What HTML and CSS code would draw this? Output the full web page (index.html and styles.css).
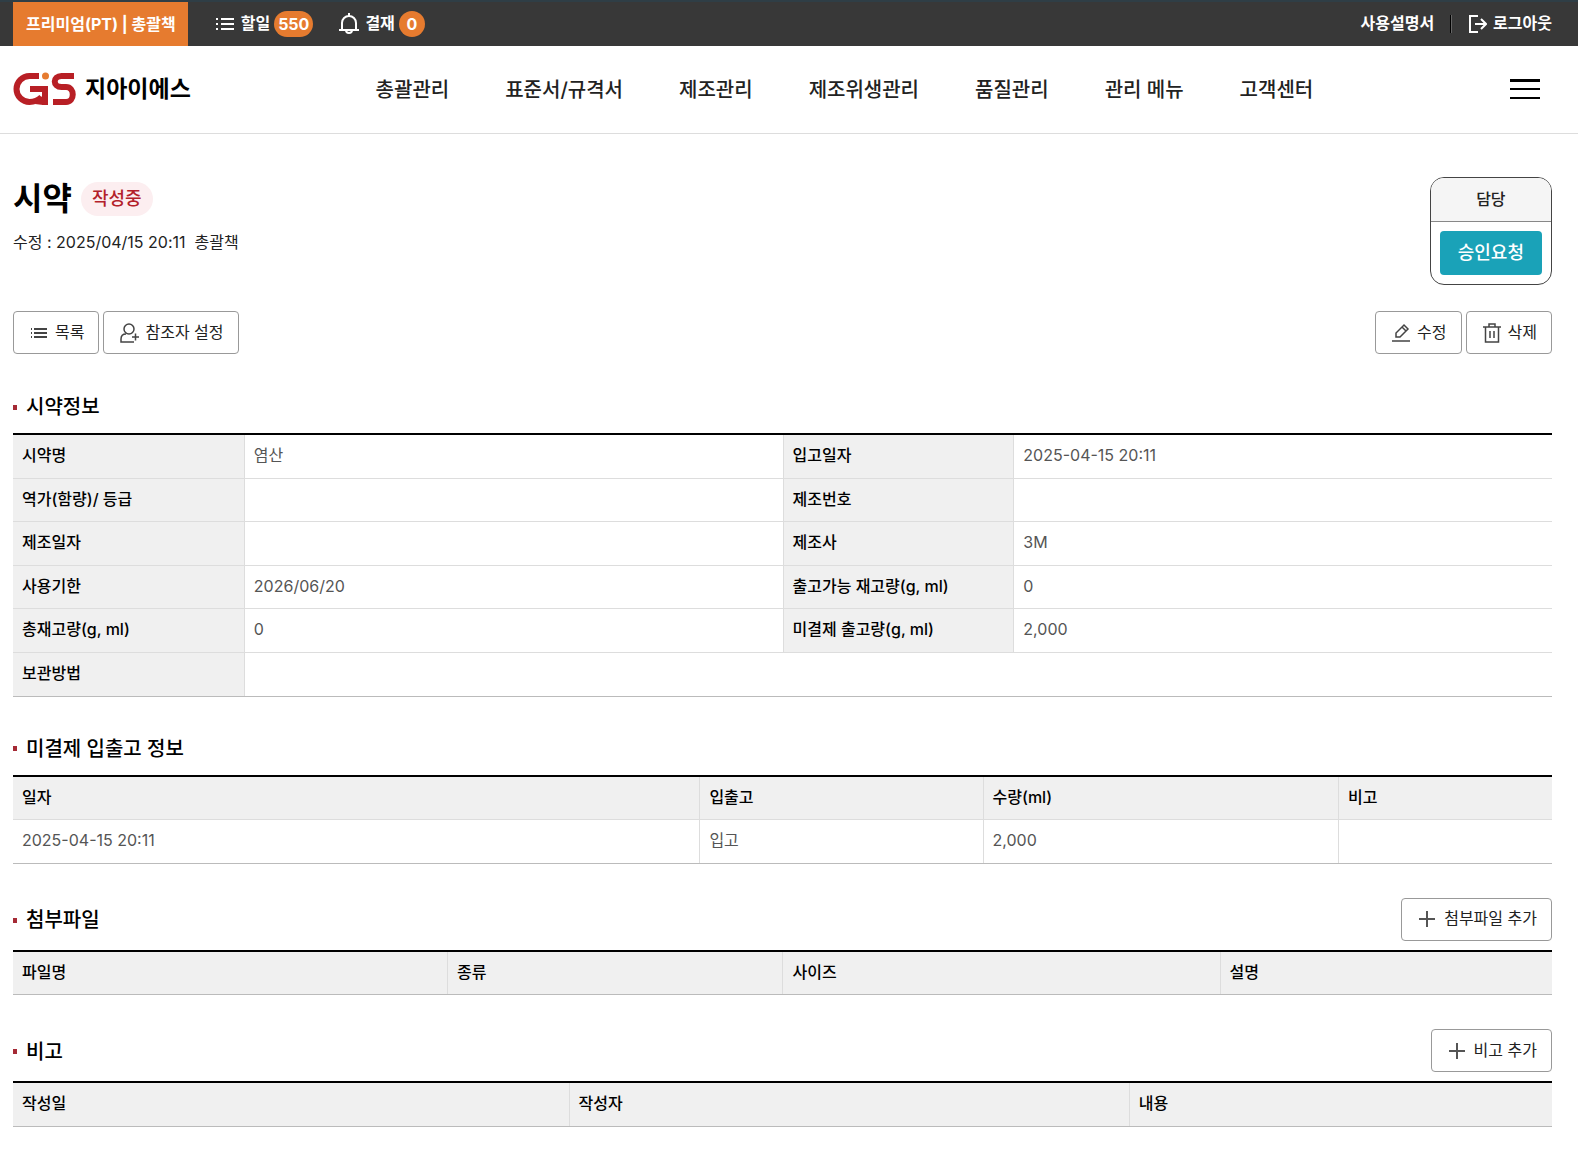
FILE: index.html
```html
<!DOCTYPE html>
<html lang="ko">
<head>
    <meta charset="UTF-8">
    <meta name="viewport" content="width=device-width, initial-scale=1">
    <title>시약 | 지아이에스</title>
    <link rel="stylesheet" href="styles.css">
</head>
<body>
    <div class="topbar">
        <div class="topbar-left">
            <span class="plan">프리미엄(PT) | 총괄책</span>
            <a class="top-link todo" href="#">
                <svg width="20" height="20" viewBox="0 0 20 20" fill="#fff">
                    <path d="M1 4h2v2H1zM1 9h2v2H1zM1 14h2v2H1zM6 4h13v2H6zM6 9h13v2H6zM6 14h13v2H6z"/>
                </svg>
                할일 <span class="count">550</span>
            </a>
            <a class="top-link" href="#">
                <svg width="20" height="24" viewBox="0 0 20 24" fill="none" stroke="#fff" stroke-width="2">
                    <path d="M0 18h20M3 18v-7a7 7 0 0 1 14 0v7M10 4V1M7 18a3 3 0 0 0 6 0"/>
                </svg>
                결재 <span class="count">0</span>
            </a>
        </div>
        <div class="topbar-right">
            <a class="top-link" href="#">사용설명서</a>
            <span class="divider"></span>
            <a class="top-link" href="#">
                <svg width="18" height="20" viewBox="0 0 18 20" fill="none" stroke="#fff" stroke-width="2">
                    <path d="M9 2H1v16h8M6 10h11M12 5l5 5-5 5"/>
                </svg>
                로그아웃
            </a>
        </div>
    </div>

    <header class="header">
        <a class="logo" href="#">
            <svg width="63" height="34" viewBox="0 0 63 34" fill="none" stroke="#b81f25" stroke-width="6">
                <path d="M26 4H16.500a13 13 0 0 0 0 26c5 0 9-2 12-5"/>
                <path d="M17 17H32V33M61 4H48.500c-9 0-9 11 0 11H53c9 0 9 15 0 15H40"/>
                <path d="M22 32l8-9v10z" fill="#b81f25" stroke="none"/>
                <circle cx="32.500" cy="4" r="3.500" fill="#e67b2f" stroke="none"/>
            </svg>
            <span>지아이에스</span>
        </a>
        <nav class="nav">
            <a href="#">총괄관리</a>
            <a href="#">표준서/규격서</a>
            <a href="#">제조관리</a>
            <a href="#">제조위생관리</a>
            <a href="#">품질관리</a>
            <a href="#">관리 메뉴</a>
            <a href="#">고객센터</a>
        </nav>
        <button class="menu-btn" type="button" aria-label="전체 메뉴">
            <svg width="30" height="22" viewBox="0 0 30 22" fill="#000">
                <path d="M0 0h30v3H0zM0 9h30v2H0zM0 18h30v2H0z"/>
            </svg>
        </button>
    </header>

    <main class="content">
        <div class="page-head">
            <div>
                <div class="title-row">
                    <h1>시약</h1>
                    <span class="status">작성중</span>
                </div>
                <p class="meta">수정 : 2025/04/15 20:11&nbsp; 총괄책</p>
            </div>
            <div class="approval">
                <div class="approval-role">담당</div>
                <button class="approval-btn" type="button">승인요청</button>
            </div>
        </div>

        <div class="toolbar">
            <div class="btn-group">
                <button class="btn" type="button">
                    <svg width="18" height="18" viewBox="0 0 18 18" fill="#444">
                        <path d="M1 4h1v2H1zM1 8h1v2H1zM1 12h1v2H1zM4 4h13v2H4zM4 8h13v2H4zM4 12h13v2H4z"/>
                    </svg>
                    목록
                </button>
                <button class="btn btn-user" type="button">
                    <svg width="20" height="20" viewBox="0 0 20 20" fill="none" stroke="#444" stroke-width="1.500">
                        <circle cx="9" cy="6" r="5"/>
                        <path d="M6 11c-3 0-5 2-5 5v3h13M12 14h7M15.500 10.500v7"/>
                    </svg>
                    참조자 설정
                </button>
            </div>
            <div class="btn-group">
                <button class="btn" type="button">
                    <svg width="18" height="20" viewBox="0 0 18 20" fill="none" stroke="#444" stroke-width="1.500">
                        <path d="M0 18h18M4 14v-4l8-8 4 4-8 8zM10 4l4 4"/>
                    </svg>
                    수정
                </button>
                <button class="btn" type="button">
                    <svg width="18" height="20" viewBox="0 0 18 20" fill="none" stroke="#444" stroke-width="1.500">
                        <path d="M0 4h18M6 4V1h6v3M2.500 4v15h13V4M7 8v7M11 8v7"/>
                    </svg>
                    삭제
                </button>
            </div>
        </div>

        <section class="section">
            <div class="section-head">
                <h2>시약정보</h2>
            </div>
            <table class="info-table">
                <tr>
                    <th scope="row">시약명</th>
                    <td>염산</td>
                    <th scope="row">입고일자</th>
                    <td>2025-04-15 20:11</td>
                </tr>
                <tr>
                    <th scope="row">역가(함량)/ 등급</th>
                    <td></td>
                    <th scope="row">제조번호</th>
                    <td></td>
                </tr>
                <tr>
                    <th scope="row">제조일자</th>
                    <td></td>
                    <th scope="row">제조사</th>
                    <td>3M</td>
                </tr>
                <tr>
                    <th scope="row">사용기한</th>
                    <td>2026/06/20</td>
                    <th scope="row">출고가능 재고량(g, ml)</th>
                    <td>0</td>
                </tr>
                <tr>
                    <th scope="row">총재고량(g, ml)</th>
                    <td>0</td>
                    <th scope="row">미결제 출고량(g, ml)</th>
                    <td>2,000</td>
                </tr>
                <tr>
                    <th scope="row">보관방법</th>
                    <td colspan="3"></td>
                </tr>
            </table>
        </section>

        <section class="section">
            <div class="section-head">
                <h2>미결제 입출고 정보</h2>
            </div>
            <table class="stock-table">
                <thead>
                    <tr>
                        <th scope="col">일자</th>
                        <th scope="col">입출고</th>
                        <th scope="col">수량(ml)</th>
                        <th scope="col">비고</th>
                    </tr>
                </thead>
                <tbody>
                    <tr>
                        <td>2025-04-15 20:11</td>
                        <td>입고</td>
                        <td>2,000</td>
                        <td></td>
                    </tr>
                </tbody>
            </table>
        </section>

        <section class="section">
            <div class="section-head with-btn">
                <h2>첨부파일</h2>
                <button class="btn btn-add" type="button">
                    <svg width="18" height="18" viewBox="0 0 18 18" fill="none" stroke="#555" stroke-width="2">
                        <path d="M1 9h16M9 1v16"/>
                    </svg>
                    첨부파일 추가
                </button>
            </div>
            <table class="file-table">
                <thead>
                    <tr>
                        <th scope="col">파일명</th>
                        <th scope="col">종류</th>
                        <th scope="col">사이즈</th>
                        <th scope="col">설명</th>
                    </tr>
                </thead>
            </table>
        </section>

        <section class="section">
            <div class="section-head with-btn">
                <h2>비고</h2>
                <button class="btn btn-add" type="button">
                    <svg width="18" height="18" viewBox="0 0 18 18" fill="none" stroke="#555" stroke-width="2">
                        <path d="M1 9h16M9 1v16"/>
                    </svg>
                    비고 추가
                </button>
            </div>
            <table class="note-table">
                <thead>
                    <tr>
                        <th scope="col">작성일</th>
                        <th scope="col">작성자</th>
                        <th scope="col">내용</th>
                    </tr>
                </thead>
            </table>
        </section>
    </main>
</body>
</html>
```
FILE: styles.css
```css
* {
    box-sizing: border-box;
}
body {
    margin: 0;
    background-color: #fff;
    color: #222;
    font-family: Inter, "Noto Sans CJK KR", sans-serif;
    font-size: 16px;
    line-height: 1.6;
}
a {
    color: inherit;
    text-decoration: none;
}
button {
    font: inherit;
    color: inherit;
    cursor: pointer;
}
h1, h2, p {
    margin: 0;
}
svg {
    flex: none;
}

/* top bar */
.topbar {
    display: flex;
    justify-content: space-between;
    height: 46px;
    padding: 0 26px 0 13px;
    border-top: 2px solid #2f3e46;
    background-color: #383838;
    color: #fff;
    font-weight: 700;
}
.topbar-left,
.topbar-right,
.top-link {
    display: flex;
    align-items: center;
}
.top-link {
    gap: 4px;
}
.top-link svg {
    margin-right: 2px;
}
.plan {
    padding: 0 12px 0 13px;
    background-color: #e67b2f;
    line-height: 44px;
}
.todo {
    margin: 0 26px 0 27px;
}
.count {
    min-width: 26px;
    padding: 0 4px;
    border-radius: 13px;
    background-color: #e67b2f;
    line-height: 26px;
    text-align: center;
}
.divider {
    width: 2px;
    height: 18px;
    margin: 0 17px 0 16px;
    border-left: 1px solid #000;
    background-color: #666;
}

/* header */
.header {
    display: flex;
    align-items: center;
    justify-content: space-between;
    height: 88px;
    padding: 0 26px 0 13px;
    border-bottom: 1px solid #ddd;
}
.logo {
    display: flex;
    align-items: center;
    gap: 9px;
    color: #000;
    font-size: 23px;
    font-weight: 700;
}
.nav {
    display: flex;
    gap: 56px;
    font-size: 20px;
    font-weight: 500;
}
.menu-btn {
    display: flex;
    padding: 12px;
    border: 0;
    background: none;
}

/* page title */
.content {
    padding: 43px 26px 20px 13px;
}
.page-head {
    display: flex;
    justify-content: space-between;
}
.title-row {
    display: flex;
    align-items: center;
    gap: 9px;
    height: 43px;
}
h1 {
    color: #000;
    font-size: 32px;
    font-weight: 700;
}
.status {
    padding: 0 11px;
    border-radius: 17px;
    background-color: #fceef0;
    color: #b3202a;
    font-size: 18px;
    font-weight: 500;
    line-height: 34px;
}
.meta {
    margin-top: 10px;
}
.approval {
    border: 1px solid #444;
    border-radius: 14px;
    overflow: hidden;
}
.approval-role {
    border-bottom: 1px solid #888;
    background-color: #f5f5f5;
    font-weight: 500;
    line-height: 43px;
    text-align: center;
}
.approval-btn {
    display: block;
    margin: 9px;
    padding: 0 18px;
    border: 0;
    border-radius: 4px;
    background-color: #1aa2b8;
    color: #fff;
    font-size: 18px;
    font-weight: 500;
    line-height: 44px;
}

/* buttons */
.toolbar {
    display: flex;
    justify-content: space-between;
    margin-top: 26px;
}
.btn-group {
    display: flex;
    gap: 4px;
}
.btn {
    display: flex;
    align-items: center;
    gap: 7px;
    height: 43px;
    padding: 0 14px 0 16px;
    border: 1px solid #999;
    border-radius: 4px;
    background-color: #fff;
}
.btn-user {
    gap: 5px;
}
.btn-add {
    gap: 8px;
}

/* sections */
.section {
    margin-top: 35px;
}
.section + .section {
    margin-top: 34px;
}
.section-head {
    display: flex;
    align-items: center;
    justify-content: space-between;
    height: 34px;
    margin-bottom: 10px;
}
.section-head.with-btn {
    height: 43px;
    margin-bottom: 9px;
}
h2 {
    display: flex;
    align-items: center;
    gap: 9px;
    padding-top: 2px;
    color: #000;
    font-size: 20px;
    font-weight: 500;
}
h2::before {
    content: "";
    width: 4px;
    height: 5px;
    background-color: #a52a35;
}

/* tables */
table {
    width: 100%;
    border-top: 2px solid #000;
    border-bottom: 1px solid #bbb;
    border-spacing: 0;
    table-layout: fixed;
}
th,
td {
    padding: 8px 9px 9px;
    border-bottom: 1px solid #ddd;
    text-align: left;
}
th {
    background-color: #f0f0f0;
    color: #000;
    font-weight: 500;
}
td {
    color: #555;
}
th + th,
th + td,
td + th,
td + td {
    border-left: 1px solid #ddd;
}
tbody:last-child tr:last-child > *,
thead:last-child th {
    border-bottom: 0;
}
.info-table th {
    width: 15%;
}
.stock-table th:nth-child(1) {
    width: 44.6%;
}
.stock-table th:nth-child(2) {
    width: 18.4%;
}
.stock-table th:nth-child(3) {
    width: 23.1%;
}
.file-table th:nth-child(1) {
    width: 28.2%;
}
.file-table th:nth-child(2) {
    width: 21.8%;
}
.file-table th:nth-child(3) {
    width: 28.4%;
}
.note-table th:nth-child(1) {
    width: 36.1%;
}
.note-table th:nth-child(2) {
    width: 36.4%;
}
```
